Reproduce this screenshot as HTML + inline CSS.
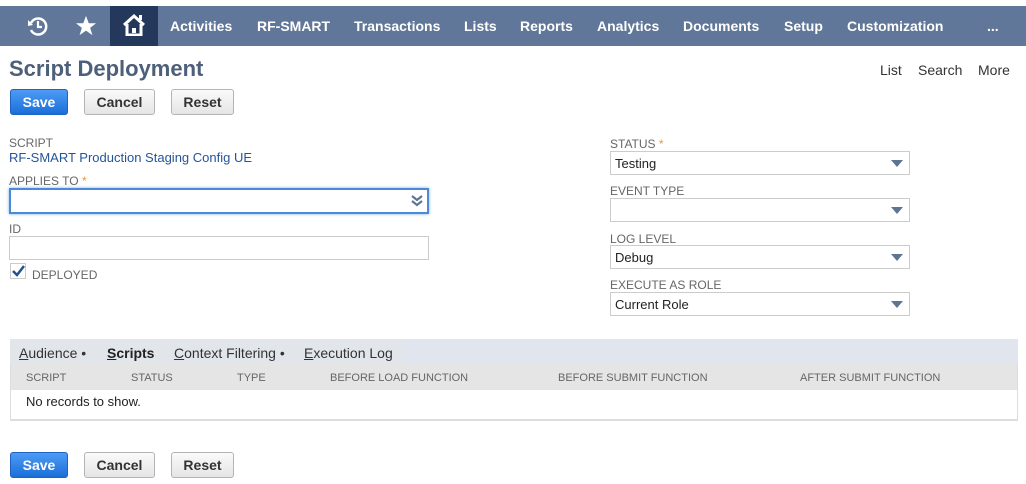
<!DOCTYPE html>
<html><head><meta charset="utf-8"><style>
*{box-sizing:border-box;margin:0;padding:0}
body{width:1026px;height:484px;background:#fff;font-family:"Liberation Sans",Arial,sans-serif;position:relative;overflow:hidden}
.a{position:absolute}
.nav{left:0;top:6px;width:1026px;height:40px;background:#607799}
.nav span{position:absolute;top:12px;color:#fff;font-weight:bold;font-size:14px}
.home{left:110px;top:0;width:48px;height:40px;background:#24385b}
.btn{position:absolute;height:26px;border:1px solid #b4b4b4;border-radius:3px;background:linear-gradient(#fafafa,#e5e5e5);font-weight:bold;font-size:14px;color:#333;text-align:center;line-height:24px}
.save{background:linear-gradient(#4d9bf5,#1a6fd8);border-color:#1d63bf;color:#fff}
.lbl{position:absolute;font-size:12px;color:#666}
.req{color:#e59a30}
.inp{position:absolute;border:1px solid #ccc;background:#fff;height:24px;font-size:13px;color:#222;padding:4px 0 0 4px}
.tri{position:absolute;right:6px;top:8px;width:0;height:0;border-left:6px solid transparent;border-right:6px solid transparent;border-top:7px solid #5f7493}
.th{position:absolute;top:372px;font-size:11px;color:#666}
</style></head><body>
<div class="a nav">
<svg class="a" style="left:27px;top:9px" width="22" height="22" viewBox="0 0 22 22"><path d="M4 8 A8 8 0 1 1 4 15" fill="none" stroke="#fff" stroke-width="2.5"/><path d="M1 5 L6 10 L1 11Z" fill="#fff"/><path d="M11 6 V12 H15" fill="none" stroke="#fff" stroke-width="2.2"/></svg>
<svg class="a" style="left:75px;top:9px" width="22" height="22" viewBox="0 0 24 24"><path d="M12 1 L15 9 L23 9 L16.5 14 L19 22 L12 17 L5 22 L7.5 14 L1 9 L9 9Z" fill="#fff"/></svg>
<div class="a home"><svg class="a" style="left:12px;top:8px" width="24" height="22" viewBox="0 0 24 22"><path d="M2 11 L12 2 L22 11" fill="none" stroke="#fff" stroke-width="3"/><path d="M5 10 V21 H19 V10" fill="none" stroke="#fff" stroke-width="3"/><rect x="10" y="14" width="4" height="5" fill="#fff"/><rect x="17" y="1" width="3" height="5" fill="#fff"/></svg></div>
<span style="left:170px">Activities</span><span style="left:257px">RF-SMART</span><span style="left:354px">Transactions</span><span style="left:464px">Lists</span><span style="left:520px">Reports</span><span style="left:597px">Analytics</span><span style="left:683px">Documents</span><span style="left:784px">Setup</span><span style="left:847px">Customization</span><span style="left:987px">...</span>
</div>
<div class="a" style="left:9px;top:56px;font-size:22px;font-weight:bold;color:#4d5f79">Script Deployment</div>
<div class="a" style="left:880px;top:62px;font-size:14px;color:#333">List</div>
<div class="a" style="left:918px;top:62px;font-size:14px;color:#333">Search</div>
<div class="a" style="left:978px;top:62px;font-size:14px;color:#333">More</div>
<div class="btn save" style="left:10px;top:89px;width:58px">Save</div>
<div class="btn" style="left:84px;top:89px;width:71px">Cancel</div>
<div class="btn" style="left:171px;top:89px;width:63px">Reset</div>

<div class="lbl" style="left:9px;top:136px">SCRIPT</div>
<div class="a" style="left:9px;top:150px;font-size:13px;color:#255599">RF-SMART Production Staging Config UE</div>
<div class="lbl" style="left:9px;top:174px">APPLIES TO <span class="req">*</span></div>
<div class="inp" style="left:9px;top:188px;width:420px;height:26px;border:2px solid #4a8ad8;box-shadow:0 0 3px #7aaee8"><svg class="a" style="right:4px;top:5px" width="12" height="12" viewBox="0 0 12 12"><path d="M1 1 L6 5 L11 1 M1 6 L6 10 L11 6" fill="none" stroke="#5f7493" stroke-width="2.2"/></svg></div>
<div class="lbl" style="left:9px;top:222px">ID</div>
<div class="inp" style="left:9px;top:236px;width:420px"></div>
<div class="a" style="left:10px;top:263px;width:16px;height:16px;border:1px solid #ccc"><svg class="a" style="left:1px;top:1px" width="13" height="12" viewBox="0 0 13 12"><path d="M1 6 L5 10 L12 1" fill="none" stroke="#24508f" stroke-width="2.5"/></svg></div>
<div class="lbl" style="left:32px;top:268px">DEPLOYED</div>

<div class="lbl" style="left:610px;top:137px">STATUS <span class="req">*</span></div>
<div class="inp" style="left:610px;top:151px;width:300px">Testing<div class="tri"></div></div>
<div class="lbl" style="left:610px;top:184px">EVENT TYPE</div>
<div class="inp" style="left:610px;top:198px;width:300px"><div class="tri"></div></div>
<div class="lbl" style="left:610px;top:232px">LOG LEVEL</div>
<div class="inp" style="left:610px;top:245px;width:300px">Debug<div class="tri"></div></div>
<div class="lbl" style="left:610px;top:278px">EXECUTE AS ROLE</div>
<div class="inp" style="left:610px;top:292px;width:300px">Current Role<div class="tri"></div></div>

<div class="a" style="left:10px;top:339px;width:1008px;height:25px;background:#e0e5ee"></div>
<div class="a" style="left:10px;top:339px;width:393px;height:25px;background:#e2e5ea"></div>
<div class="a" style="left:19px;top:345px;font-size:14px;color:#333"><u>A</u>udience •</div>
<div class="a" style="left:107px;top:345px;font-size:14px;color:#222;font-weight:bold"><u>S</u>cripts</div>
<div class="a" style="left:174px;top:345px;font-size:14px;color:#333"><u>C</u>ontext Filtering •</div>
<div class="a" style="left:304px;top:345px;font-size:14px;color:#333"><u>E</u>xecution Log</div>
<div class="a" style="left:10px;top:364px;width:1008px;height:57px;border:1px solid #ddd;border-top:none;border-bottom:2px solid #ddd;background:#fff"></div>
<div class="a" style="left:11px;top:364px;width:1006px;height:26px;background:#e5e5e5"></div>
<div class="th" style="left:26px">SCRIPT</div><div class="th" style="left:131px">STATUS</div><div class="th" style="left:237px">TYPE</div><div class="th" style="left:330px">BEFORE LOAD FUNCTION</div><div class="th" style="left:558px">BEFORE SUBMIT FUNCTION</div><div class="th" style="left:800px">AFTER SUBMIT FUNCTION</div>
<div class="a" style="left:26px;top:394px;font-size:13px;color:#222">No records to show.</div>

<div class="btn save" style="left:10px;top:452px;width:58px">Save</div>
<div class="btn" style="left:84px;top:452px;width:71px">Cancel</div>
<div class="btn" style="left:171px;top:452px;width:63px">Reset</div>
</body></html>
